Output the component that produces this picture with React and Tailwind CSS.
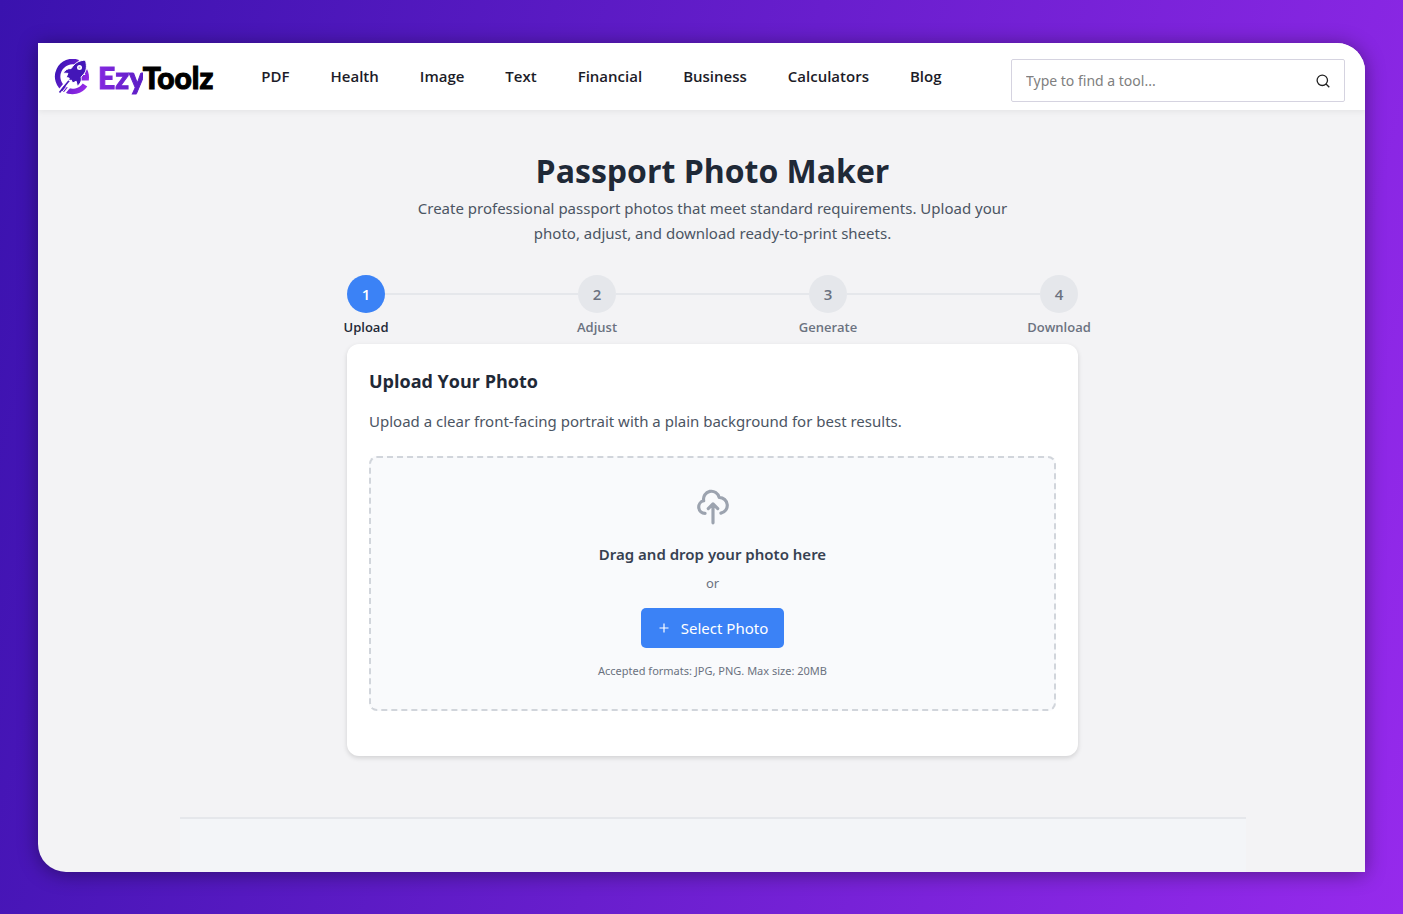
import React, { useState } from "react";

const navLinks = ["PDF", "Health", "Image", "Text", "Financial", "Business", "Calculators", "Blog"];

const steps = ["Upload", "Adjust", "Generate", "Download"];

function LogoMark() {
  return (
    <svg viewBox="0 0 36 36" className="w-9 h-9" aria-hidden="true">
      <defs>
        <linearGradient id="mark" gradientUnits="userSpaceOnUse" x1="2" y1="8" x2="35" y2="26">
          <stop offset="0" stopColor="#3a14b4" />
          <stop offset="1" stopColor="#9a2bea" />
        </linearGradient>
      </defs>
      {/* ring of the "e" */}
      <path d="M24 3.500A15 15 0 1 0 31 26" fill="none" stroke="url(#mark)" strokeWidth="5.500" />
      <path d="M33 10c1.800 3.500 2.400 7 1.800 11.500H22l5.500-5.500h3.800c-.2-1-.5-2-.9-2.700Z" fill="url(#mark)" />
      {/* exhaust trails */}
      <path d="M3 34 15 19" stroke="#fff" strokeWidth="2" />
      <path d="M9 36 20 22.500" stroke="#fff" strokeWidth="2" />
      <path d="M5.500 33.500 16 20.500" stroke="#4316b8" strokeWidth="1.600" />
      <path d="M7 34.500 17.500 21.500" stroke="#fff" strokeWidth="1" />
      {/* rocket */}
      <path
        d="M31.500 1.200c-5.300.1-9.600 1.900-12.700 6.100l-1.700 2.300c-3.100-.4-5.900 1.200-8.100 4.400l4.900.4-1.700 4.100 3 .6-.4 2.500 2.600-.4 1.200 2.800 3.600-1.700 1.200 5c3.300-2.800 4.500-5.600 3.700-9.200l2.200-2.500C32.800 12.400 33 7 31.500 1.200Z"
        fill="#4316b8"
        stroke="#fff"
        strokeWidth="1"
      />
      <circle cx="25.500" cy="8.500" r="2.500" fill="#fff" />
      <circle cx="25.500" cy="8.500" r="1" fill="#b9a3ea" />
    </svg>
  );
}

function SearchIcon() {
  return (
    <svg viewBox="0 0 16 16" className="w-4 h-4" fill="none" stroke="#222" strokeWidth="1.300" aria-hidden="true">
      <circle cx="7.300" cy="7.300" r="5.200" />
      <path d="m11 11 3.300 3.300" />
    </svg>
  );
}

function Header() {
  const [query, setQuery] = useState("");

  return (
    <header className="relative flex items-center h-[67px] pl-4 pr-5 bg-white shadow-[0_2px_6px_rgba(0,0,0,0.06)]">
      <a href="#" className="flex items-center gap-2 mr-12" aria-label="EzyToolz home">
        <LogoMark />
        <span className="font-['Lato',sans-serif] font-black text-[30px] leading-8 text-black [-webkit-text-stroke:1px_currentColor]">
          <span className="bg-linear-to-r from-[#8428e0] to-[#5a1cc4] bg-clip-text text-transparent [-webkit-text-stroke:1px_transparent]">
            Ezy
          </span>
          Toolz
        </span>
      </a>
      <nav className="flex items-center gap-[41px] font-['Open_Sans',sans-serif]" aria-label="Main">
        {navLinks.map((name) => (
          <a key={name} href="#" className="text-[15px] font-semibold text-[#1c1c28] hover:text-blue-700">
            {name}
          </a>
        ))}
      </nav>
      <form className="relative ml-auto mt-2 w-[334px]" role="search" onSubmit={(e) => e.preventDefault()}>
        <input
          type="text"
          value={query}
          onChange={(e) => setQuery(e.target.value)}
          placeholder="Type to find a tool..."
          aria-label="Find a tool"
          className="w-full h-[43px] pl-3.5 pr-10 border border-[#d5d3e0] rounded-xs text-[14px] placeholder:text-[#808080]"
        />
        <button type="submit" className="absolute right-3.5 top-3.5" aria-label="Search">
          <SearchIcon />
        </button>
      </form>
    </header>
  );
}

function Stepper({ current }) {
  return (
    <ol className="flex justify-between font-['Open_Sans',sans-serif]">
      {steps.map((label, i) => (
        <li key={label} className={`flex items-start ${i > 0 ? "flex-1" : ""}`}>
          {i > 0 && <span className="flex-1 h-0.5 mt-[18px] bg-[#e5e7eb]" />}
          <span className="flex flex-col items-center w-[38px]">
            <span
              className={`flex items-center justify-center w-[38px] h-[38px] rounded-full text-[15px] font-semibold ${
                i === current ? "bg-[#3b82f6] text-white" : "bg-[#e5e7eb] text-[#6b7280]"
              }`}
            >
              {i + 1}
            </span>
            <span
              className={`mt-1 text-[13px] leading-5 font-semibold ${
                i === current ? "text-[#1f2937]" : "text-[#6b7280]"
              }`}
            >
              {label}
            </span>
          </span>
        </li>
      ))}
    </ol>
  );
}

function UploadCard() {
  return (
    <section className="mt-[7px] px-[22px] pt-[23px] pb-[45px] bg-white rounded-xl shadow-[0_2px_5px_rgba(0,0,0,0.14)]">
      <h2 className="font-['Open_Sans',sans-serif] text-[18px] leading-7 font-bold text-[#1f2937]">
        Upload Your Photo
      </h2>
      <p className="mt-3.5 text-[15px] leading-6 text-[#4b5563]">
        Upload a clear front-facing portrait with a plain background for best results.
      </p>
      <div className="flex flex-col items-center mt-[23px] pt-[30px] pb-7 border-2 border-dashed border-[#d1d5db] rounded-lg bg-[#f9fafc]">
        <svg
          viewBox="0 0 24 24"
          className="w-[38px] h-[38px]"
          fill="none"
          stroke="#9ca3af"
          strokeWidth="2"
          strokeLinecap="round"
          strokeLinejoin="round"
          aria-hidden="true"
        >
          <path d="M7 16a4 4 0 0 1-.88-7.903A5 5 0 1 1 15.900 6h.1a5 5 0 0 1 1 9.900M15 13l-3-3m0 0-3 3m3-3v12" />
        </svg>
        <h3 className="mt-4 text-[15px] leading-6 font-semibold text-[#374151]">Drag and drop your photo here</h3>
        <p className="mt-[7px] text-[13px] leading-5 text-[#6b7280]">or</p>
        <button
          type="button"
          className="flex items-center gap-2.5 mt-[15px] h-10 px-4 rounded-[5px] bg-[#3b82f6] text-[15px] text-white hover:bg-blue-600"
        >
          <svg viewBox="0 0 14 14" className="w-3.5 h-3.5" stroke="currentColor" strokeWidth="1.200" aria-hidden="true">
            <path d="M7 2.500v9M2.500 7h9" />
          </svg>
          Select Photo
        </button>
        <p className="mt-[13px] text-[11px] leading-5 text-[#6b7280]">Accepted formats: JPG, PNG. Max size: 20MB</p>
      </div>
    </section>
  );
}

export default function App() {
  return (
    <div className="min-h-screen flex flex-col px-[38px] pt-[43px] pb-[42px] bg-linear-[105deg] from-[#3a12ae] to-[#962aec] font-['Noto_Sans',sans-serif]">
      <div className="flex-1 flex flex-col overflow-hidden rounded-tr-[28px] rounded-bl-[28px] bg-[#f3f3f5] shadow-[0_2px_20px_rgba(0,0,0,0.4)]">
        <Header />
        <main className="flex justify-center pl-[22px] pt-10">
          <div className="w-full max-w-[731px]">
            <h1 className="text-center font-['Open_Sans',sans-serif] text-[32px] leading-[42px] font-bold text-[#1f2937]">
              Passport Photo Maker
            </h1>
            <p className="mx-auto mt-1 max-w-[630px] text-center text-[15px] leading-[25px] text-[#4b5563]">
              Create professional passport photos that meet standard requirements. Upload your photo, adjust, and
              download ready-to-print sheets.
            </p>
            <div className="mt-[29px]">
              <Stepper current={0} />
            </div>
            <UploadCard />
          </div>
        </main>
        <div className="flex-1 mt-[61px] ml-[142px] mr-[119px] border-t-2 border-[#e5e7eb] bg-[#f3f5f8]" />
      </div>
    </div>
  );
}
